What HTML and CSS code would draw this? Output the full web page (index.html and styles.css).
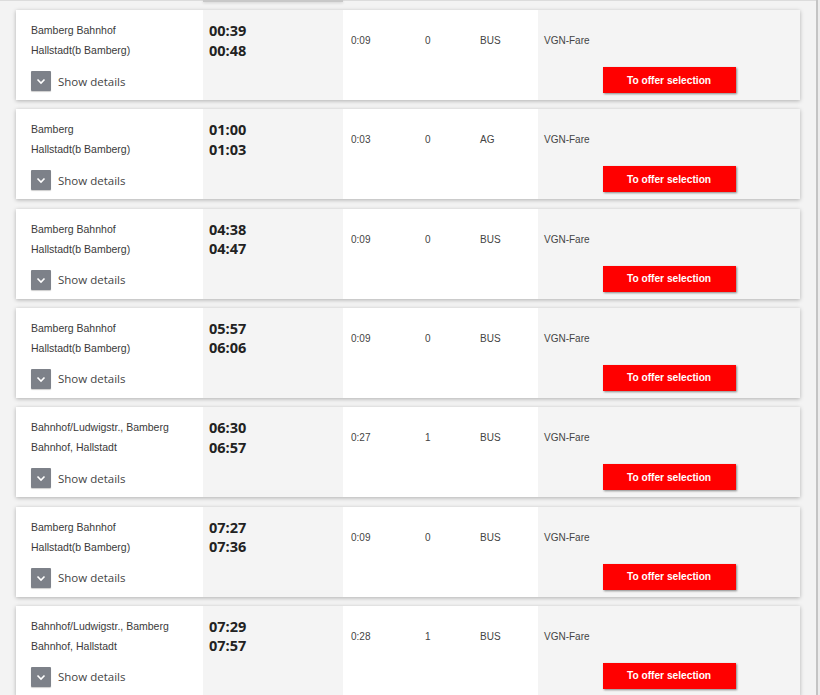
FILE: index.html
```html
<!DOCTYPE html>
<html>
<head>
  <title>Connections</title>
  <link rel="stylesheet" href="styles.css">
</head>
<body>
  <div class="page">
    <div class="scroll-edge"><div class="edge-bar"></div></div>

    <div class="results">
      <div class="card">
        <div class="col stations">
          <div class="station">Bamberg Bahnhof</div>
          <div class="station">Hallstadt(b Bamberg)</div>
          <div class="details">
            <span class="toggle-box"><svg width="20" height="20" viewBox="0 0 20 20"><path d="M6.5 8.5 L10 12 L13.5 8.5" fill="none" stroke="#fff" stroke-width="1.6"/></svg></span>
            <span class="details-label">Show details</span>
          </div>
        </div>
        <div class="col times">
          <div class="time">00:39</div>
          <div class="time">00:48</div>
        </div>
        <div class="col info">
          <span>0:09</span><span>0</span><span>BUS</span>
        </div>
        <div class="col fare">
          <div class="fare-name">VGN-Fare</div>
          <button class="offer">To offer selection</button>
        </div>
      </div>

      <div class="card">
        <div class="col stations">
          <div class="station">Bamberg</div>
          <div class="station">Hallstadt(b Bamberg)</div>
          <div class="details">
            <span class="toggle-box"><svg width="20" height="20" viewBox="0 0 20 20"><path d="M6.5 8.5 L10 12 L13.5 8.5" fill="none" stroke="#fff" stroke-width="1.6"/></svg></span>
            <span class="details-label">Show details</span>
          </div>
        </div>
        <div class="col times">
          <div class="time">01:00</div>
          <div class="time">01:03</div>
        </div>
        <div class="col info">
          <span>0:03</span><span>0</span><span>AG</span>
        </div>
        <div class="col fare">
          <div class="fare-name">VGN-Fare</div>
          <button class="offer">To offer selection</button>
        </div>
      </div>

      <div class="card">
        <div class="col stations">
          <div class="station">Bamberg Bahnhof</div>
          <div class="station">Hallstadt(b Bamberg)</div>
          <div class="details">
            <span class="toggle-box"><svg width="20" height="20" viewBox="0 0 20 20"><path d="M6.5 8.5 L10 12 L13.5 8.5" fill="none" stroke="#fff" stroke-width="1.6"/></svg></span>
            <span class="details-label">Show details</span>
          </div>
        </div>
        <div class="col times">
          <div class="time">04:38</div>
          <div class="time">04:47</div>
        </div>
        <div class="col info">
          <span>0:09</span><span>0</span><span>BUS</span>
        </div>
        <div class="col fare">
          <div class="fare-name">VGN-Fare</div>
          <button class="offer">To offer selection</button>
        </div>
      </div>

      <div class="card">
        <div class="col stations">
          <div class="station">Bamberg Bahnhof</div>
          <div class="station">Hallstadt(b Bamberg)</div>
          <div class="details">
            <span class="toggle-box"><svg width="20" height="20" viewBox="0 0 20 20"><path d="M6.5 8.5 L10 12 L13.5 8.5" fill="none" stroke="#fff" stroke-width="1.6"/></svg></span>
            <span class="details-label">Show details</span>
          </div>
        </div>
        <div class="col times">
          <div class="time">05:57</div>
          <div class="time">06:06</div>
        </div>
        <div class="col info">
          <span>0:09</span><span>0</span><span>BUS</span>
        </div>
        <div class="col fare">
          <div class="fare-name">VGN-Fare</div>
          <button class="offer">To offer selection</button>
        </div>
      </div>

      <div class="card">
        <div class="col stations">
          <div class="station">Bahnhof/Ludwigstr., Bamberg</div>
          <div class="station">Bahnhof, Hallstadt</div>
          <div class="details">
            <span class="toggle-box"><svg width="20" height="20" viewBox="0 0 20 20"><path d="M6.5 8.5 L10 12 L13.5 8.5" fill="none" stroke="#fff" stroke-width="1.6"/></svg></span>
            <span class="details-label">Show details</span>
          </div>
        </div>
        <div class="col times">
          <div class="time">06:30</div>
          <div class="time">06:57</div>
        </div>
        <div class="col info">
          <span>0:27</span><span>1</span><span>BUS</span>
        </div>
        <div class="col fare">
          <div class="fare-name">VGN-Fare</div>
          <button class="offer">To offer selection</button>
        </div>
      </div>

      <div class="card">
        <div class="col stations">
          <div class="station">Bamberg Bahnhof</div>
          <div class="station">Hallstadt(b Bamberg)</div>
          <div class="details">
            <span class="toggle-box"><svg width="20" height="20" viewBox="0 0 20 20"><path d="M6.5 8.5 L10 12 L13.5 8.5" fill="none" stroke="#fff" stroke-width="1.6"/></svg></span>
            <span class="details-label">Show details</span>
          </div>
        </div>
        <div class="col times">
          <div class="time">07:27</div>
          <div class="time">07:36</div>
        </div>
        <div class="col info">
          <span>0:09</span><span>0</span><span>BUS</span>
        </div>
        <div class="col fare">
          <div class="fare-name">VGN-Fare</div>
          <button class="offer">To offer selection</button>
        </div>
      </div>

      <div class="card">
        <div class="col stations">
          <div class="station">Bahnhof/Ludwigstr., Bamberg</div>
          <div class="station">Bahnhof, Hallstadt</div>
          <div class="details">
            <span class="toggle-box"><svg width="20" height="20" viewBox="0 0 20 20"><path d="M6.5 8.5 L10 12 L13.5 8.5" fill="none" stroke="#fff" stroke-width="1.6"/></svg></span>
            <span class="details-label">Show details</span>
          </div>
        </div>
        <div class="col times">
          <div class="time">07:29</div>
          <div class="time">07:57</div>
        </div>
        <div class="col info">
          <span>0:28</span><span>1</span><span>BUS</span>
        </div>
        <div class="col fare">
          <div class="fare-name">VGN-Fare</div>
          <button class="offer">To offer selection</button>
        </div>
      </div>
    </div>
  </div>
</body>
</html>
```

FILE: styles.css
```css
html, body {
  margin: 0;
  padding: 0;
  height: 100%;
  overflow: hidden;
}

body {
  font-family: 'Liberation Sans', Arial, sans-serif;
  color: #333;
  background: #ececec;
}

.page {
  width: 816px;
  height: 100%;
  background: #f3f3f3;
  border-right: 2px solid #c4c4c4;
}

.scroll-edge {
  height: 1px;
  background: #dcdcdc;
}

.edge-bar {
  margin-left: 203px;
  width: 140px;
  height: 2px;
  background: #c8c8c8;
  box-shadow: 0 1px 3px rgba(0,0,0,0.15);
}

.results {
  padding: 9px 16px 0 16px;
}

.card {
  display: flex;
  height: 90px;
  margin-bottom: 9.33px;
  background: #fff;
  box-shadow: 0 1px 4px rgba(0,0,0,0.28);
}

.col {
  box-sizing: border-box;
  height: 100%;
}

.stations {
  width: 187px;
  padding: 10px 0 0 15px;
  background: #fff;
}

.station {
  font-size: 10.5px;
  line-height: 20px;
  color: #3a3a3a;
}

.details {
  display: flex;
  align-items: center;
  margin-top: 11px;
}

.toggle-box {
  display: block;
  width: 20px;
  height: 20px;
  background: #7d8189;
  border-radius: 1px;
  box-shadow: 0 1px 1px rgba(0,0,0,0.2);
}

.toggle-box svg {
  display: block;
}

.details-label {
  margin-left: 7px;
  font-family: 'Open Sans', sans-serif;
  font-size: 11.5px;
  color: #444;
}

.times {
  width: 140px;
  padding: 11px 0 0 6px;
  background: #f4f4f4;
}

.time {
  font-family: 'Open Sans', sans-serif;
  font-weight: 700;
  font-size: 14.5px;
  line-height: 19.5px;
  color: #222;
}

.info {
  width: 195px;
  display: grid;
  grid-template-columns: 74px 55px 1fr;
  align-content: start;
  padding: 21px 0 0 8px;
  font-size: 10px;
  line-height: 20px;
  color: #444;
  background: #fff;
}

.fare {
  flex: 1;
  display: flex;
  flex-direction: column;
  align-items: center;
  padding-top: 21px;
  background: #f4f4f4;
}

.fare-name {
  align-self: flex-start;
  margin-left: 6px;
  font-size: 10px;
  line-height: 20px;
  color: #444;
}

.offer {
  margin-top: 16px;
  width: 133px;
  height: 26px;
  border: none;
  background: #ff0000;
  color: #fff;
  font-family: 'Liberation Sans', Arial, sans-serif;
  font-weight: 700;
  font-size: 10.2px;
  box-shadow: 1px 1px 2px rgba(0,0,0,0.45);
  cursor: pointer;
}
```
